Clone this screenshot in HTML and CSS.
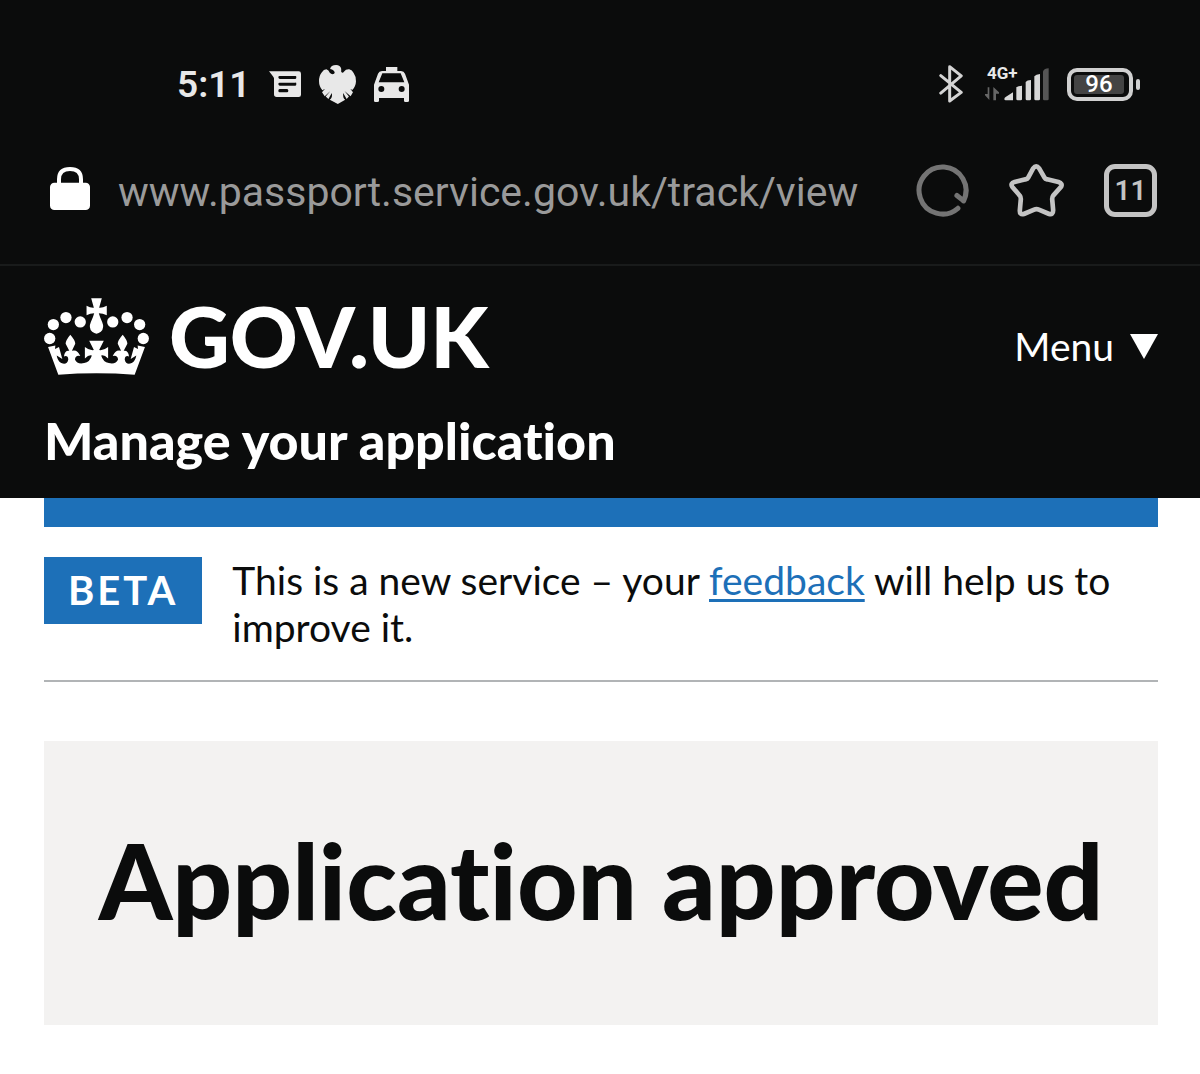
FILE: index.html
```html
<!DOCTYPE html>
<html lang="en">
<head>
  <meta charset="UTF-8" />
  <title>Manage your application - GOV.UK</title>
  <meta name="viewport" content="width=device-width, initial-scale=1" />
  <link rel="stylesheet" href="styles.css">
</head>
<body>
  <div class="phone-chrome">
    <div class="status-bar">
      <div class="status-left">
        <span class="clock">5:11</span>
        <svg class="icon" viewBox="327 60 96 78" width="32" height="26" aria-hidden="true">
          <path fill="#e8e8e8" fill-rule="evenodd" d="M327 61H416Q423 61 423 68V131Q423 138 416 138H350Q342 138 342 130V82Q341 78 327 61ZM359 75Q355 75 355 79T359 84H406Q409 84 409 79T406 75ZM359 95Q355 95 355 99T359 104H406Q409 104 409 99T406 95ZM359 114Q355 114 355 119T359 124H381Q385 124 385 119T381 114Z"/>
        </svg>
        <svg class="icon" viewBox="480 42 110 116" width="37" height="39" aria-hidden="true">
          <path fill="#e8e8e8" d="M513 54Q515 42 531 42Q543 42 546 53V62Q550 68 554 62Q560 54 570 55Q579 57 583 66Q590 75 590 91Q589 107 579 116L573 113L581 123L574 135L556 119L569 136L562 143L552 125Q550 140 558 145L536 158L512 145Q521 139 518 125L508 143L500 136L514 119L497 135L489 123L498 113L490 117Q480 105 480 90Q480 73 488 64Q494 55 502 55Q509 57 512 65Q518 72 525 68Q529 63 524 59Q519 55 513 54Z"/>
        </svg>
        <svg class="icon" viewBox="642 48 105 105" width="35" height="35" aria-hidden="true">
          <path fill="#e8e8e8" fill-rule="evenodd" d="M678 48H712V60H723Q732 60 735 68L747 101V149Q747 153 742 153H736Q732 153 732 149V141H657V149Q657 153 652 153H646Q642 153 642 149V101L654 68Q657 60 666 60H678ZM667 67L656 94H733L722 67ZM664 105A9 9 0 1 0 664 123A9 9 0 1 0 664 105ZM725 105A9 9 0 1 0 725 123A9 9 0 1 0 725 105Z"/>
        </svg>
      </div>
      <div class="status-right">
        <svg class="icon" viewBox="59 43 72 115" width="24" height="38" aria-hidden="true">
          <path fill="none" stroke="#d4d4d4" stroke-width="9" stroke-linecap="round" stroke-linejoin="round" d="M64 75L126 126L91 152V48L126 76L64 128"/>
        </svg>
        <div class="signal">
          <span class="network">4G+</span>
          <svg class="signal-bars" viewBox="197 50 192 99" width="64" height="33" aria-hidden="true">
            <path fill="#666" d="M205 108H210V146L197 132V128H205ZM222 147V107L239 123V127H230V147Z"/>
            <path fill="#d8d8d8" d="M255 143Q255 139 260 136L281 123V147H259Q255 147 255 143ZM291 108Q296 103 308 103V144Q308 147 304 147H295Q291 147 291 143ZM319 92Q323 86 335 86V143Q335 147 331 147H323Q319 147 319 143ZM345 75Q350 69 362 68V143Q362 147 358 147H349Q345 147 345 143Z"/>
            <path fill="#555" d="M371 60Q375 51 388 51V143Q388 147 384 147H375Q371 147 371 143Z"/>
          </svg>
        </div>
        <div class="battery"><span class="battery-level">96</span></div>
      </div>
    </div>
    <form class="address-bar">
      <svg class="lock" viewBox="60 51 120 129" width="40" height="43" aria-hidden="true">
        <path fill="none" stroke="#fff" stroke-width="12" d="M87 106V88Q87 57 120 57T153 88V106"/>
        <rect x="60" y="98" width="120" height="82" rx="13" fill="#fff"/>
      </svg>
      <input class="url" type="text" aria-label="Address" value="www.passport.service.gov.uk/track/view" readonly>
      <div class="browser-actions">
        <button type="button" aria-label="Reload">
          <svg viewBox="50 42 158 158" width="53" height="53">
            <path fill="none" stroke="#747474" stroke-width="15" stroke-linecap="round" stroke-linejoin="round" d="M175 174A70 70 0 1 1 192 152L172 136M192 152Q199 138 199 121"/>
          </svg>
        </button>
        <button type="button" aria-label="Bookmark">
          <svg viewBox="328 37 164 159" width="55" height="53">
            <path fill="none" stroke="#c4c4c4" stroke-width="14" stroke-linejoin="round" d="M400 50Q409 38 418 50L434 78Q436 82 442 83L476 91Q489 95 484 105L460 132Q457 136 457 142L460 176Q460 190 448 187L417 174Q410 171 403 174L372 187Q359 190 360 176L363 142Q363 136 360 132L337 105Q331 95 344 91L377 83Q383 82 385 78Z"/>
          </svg>
        </button>
        <button type="button" class="tabs" aria-label="11 open tabs">11</button>
      </div>
    </form>
  </div>

  <header class="header">
    <div class="header-top">
      <a class="logo" href="#">
        <svg viewBox="42 36 316 232" width="105" height="77" aria-hidden="true">
          <g fill="#fff">
            <circle cx="59" cy="158" r="17"/>
            <circle cx="70" cy="116" r="17"/>
            <circle cx="108" cy="95" r="17"/>
            <circle cx="151" cy="108" r="17"/>
            <circle cx="249" cy="108" r="17"/>
            <circle cx="292" cy="95" r="17"/>
            <circle cx="330" cy="116" r="17"/>
            <circle cx="341" cy="158" r="17"/>
            <path d="M184 37H216L208 65Q218 66 231 59V88Q219 82 207 82Q210 94 217 108Q225 126 213 138Q200 149 187 138Q175 126 183 108Q190 94 193 82Q181 82 170 88V59Q182 66 192 65Z"/>
            <path d="M85 267L54 184L76 179L75 190L87 184L97 220L80 209Q83 226 94 232Q111 239 115 221Q114 208 102 212Q104 193 118 195L107 174Q107 164 121 147Q136 164 136 174L126 195Q143 190 151 211Q137 207 135 221Q142 237 163 232Q180 229 186 209Q177 206 165 218V184Q178 195 192 193L178 165H222L208 193Q222 195 235 184V218Q223 206 214 209Q220 229 237 232Q258 237 265 221Q263 207 249 211Q257 190 274 195L264 174Q264 164 279 147Q293 164 293 174L282 195Q296 193 298 212Q286 208 285 221Q289 239 306 232Q317 226 320 209L303 220L313 184L325 190L324 179L346 184L315 267Q200 259 85 267Z"/>
          </g>
        </svg>
        <span class="logo-text">GOV.UK</span>
      </a>
      <button type="button" class="menu-button">
        Menu
        <svg viewBox="0 0 28 25" width="28" height="25" aria-hidden="true"><path fill="#fff" d="M0 0H28L14 25Z"/></svg>
      </button>
    </div>
    <a class="service-name" href="#">Manage your application</a>
  </header>

  <div class="container">
    <div class="blue-bar"></div>
    <div class="phase-banner">
      <strong class="tag">BETA</strong>
      <p class="phase-text">This is a new service – your <a href="#">feedback</a> will help us to improve it.</p>
    </div>
    <main class="panel">
      <h1>Application approved</h1>
    </main>
  </div>
</body>
</html>
```

FILE: styles.css
```css
* {
  box-sizing: border-box;
}
body {
  margin: 0;
  background: #fff;
  color: #0b0c0c;
  font-family: Lato, "Noto Sans", sans-serif;
  font-variant-ligatures: none;
}
button {
  border: none;
  padding: 0;
  background: none;
  color: inherit;
  font-family: inherit;
  cursor: pointer;
}
svg {
  display: block;
  flex-shrink: 0;
}

/* Phone status bar and browser bar */
.phone-chrome {
  background: #0b0c0c;
  border-bottom: 2px solid #191b1b;
  font-family: Roboto, sans-serif;
}
.status-bar {
  display: flex;
  align-items: center;
  justify-content: space-between;
  padding: 60px 60px 0 177px;
}
.status-left,
.status-right {
  display: flex;
  align-items: center;
  height: 48px;
}
.status-left,
.status-right {
  gap: 18px;
}
.clock {
  color: #e8e8e8;
  font-size: 37px;
  font-weight: 600;
}
.signal {
  position: relative;
  margin-left: 4px;
}
.network {
  position: absolute;
  top: -2px;
  left: 2px;
  color: #e8e8e8;
  font-size: 17px;
  line-height: 14px;
  font-weight: 700;
}
.battery {
  position: relative;
  width: 66px;
  height: 33px;
  padding: 3px;
  border: 4px solid #d0d0d0;
  border-radius: 10px;
  margin-right: 7px;
}
.battery::after {
  content: "";
  position: absolute;
  top: 7px;
  right: -11px;
  width: 4px;
  height: 11px;
  border-radius: 2px;
  background: #d0d0d0;
}
.battery-level {
  display: block;
  width: 50px;
  border-radius: 3px;
  background: #444;
  color: #fff;
  font-size: 24px;
  line-height: 19px;
  font-weight: 500;
  text-align: center;
}
.address-bar {
  display: flex;
  align-items: center;
  padding: 48px 43px 40px 50px;
}
.lock {
  margin-bottom: 4px;
  margin-right: 28px;
}
.url {
  flex: 1;
  min-width: 0;
  height: 68px;
  padding: 4px 0 0;
  border: none;
  outline: none;
  background: none;
  color: #9a9a9a;
  font-family: inherit;
  font-size: 41px;
}
.browser-actions {
  display: flex;
  align-items: center;
  gap: 40px;
}
.tabs {
  width: 53px;
  height: 53px;
  border: 5px solid #c4c4c4;
  border-radius: 11px;
  color: #c4c4c4;
  font-size: 28px;
  font-weight: 600;
}

/* GOV.UK header */
.header {
  background: #0b0c0c;
  color: #fff;
  padding: 30px 42px 28px 44px;
}
.header a {
  color: inherit;
  text-decoration: none;
}
.header-top {
  display: flex;
  align-items: flex-end;
  justify-content: space-between;
  margin-bottom: 34px;
}
.logo {
  display: flex;
  align-items: center;
  gap: 20px;
}
.logo-text {
  font-size: 84px;
  line-height: 80px;
  font-weight: 900;
}
.menu-button {
  display: flex;
  align-items: center;
  gap: 16px;
  font-size: 39px;
  line-height: 60px;
}
.service-name {
  display: block;
  font-size: 52px;
  line-height: 60px;
  font-weight: 900;
}

/* Page content */
.container {
  padding: 0 42px 48px 44px;
}
.blue-bar {
  height: 29px;
  background: #1d70b8;
}
.phase-banner {
  display: flex;
  align-items: flex-start;
  gap: 30px;
  padding: 30px 0 29px;
  border-bottom: 2px solid #b1b4b6;
  margin-bottom: 59px;
}
.tag {
  padding: 10px 24px;
  background: #1d70b8;
  color: #fff;
  font-size: 40px;
  line-height: 47px;
  letter-spacing: 3px;
}
.phase-text {
  flex: 1;
  margin: 0;
  font-size: 39px;
  line-height: 47px;
}
.phase-text a {
  color: #1d70b8;
  text-decoration-thickness: 3px;
  text-underline-offset: 4px;
}
.panel {
  padding: 78px 40px 86px;
  background: #f3f2f1;
  text-align: center;
}
.panel h1 {
  margin: 0;
  font-size: 105px;
  line-height: 120px;
  font-weight: 900;
}
```
